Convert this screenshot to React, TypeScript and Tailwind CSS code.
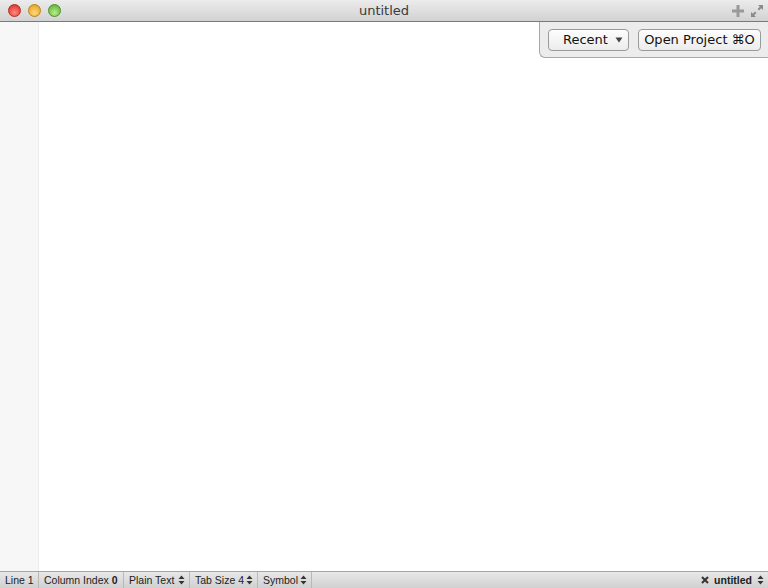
const font = { fontFamily: '"Lucida Grande", "DejaVu Sans", "Liberation Sans", sans-serif' };
const statusFont = { fontFamily: '"Liberation Sans", Arial, sans-serif' };

const Light = ({ from, to, edge }: { from: string; to: string; edge: string }) => (
  <span
    className="w-[13px] h-[13px] rounded-full border"
    style={{ background: `radial-gradient(circle at 50% 70%, ${from}, ${to})`, borderColor: edge }}
  />
);

const Updown = () => (
  <svg width="7" height="10" viewBox="0 0 7 10" className="shrink-0">
    <path d="M3.5 0.5 L6.5 4 H0.5 Z M3.5 9.5 L6.5 6 H0.5 Z" fill="#333" />
  </svg>
);

const StatusItem = ({ children, arrows, w }: { children: React.ReactNode; arrows?: boolean; w: string }) => (
  <div
    className={`flex items-center justify-between shrink-0 whitespace-nowrap h-full pl-[5px] pr-[4px] border-r border-[#b8b8b8] text-[10.5px] leading-none text-[#222] ${w}`}
  >
    <span>{children}</span>
    {arrows && <Updown />}
  </div>
);

const App = () => {
  return (
    <div className="w-[768px] h-[588px] flex flex-col bg-white overflow-hidden" style={font}>
      {/* title bar */}
      <div className="h-[22px] flex items-center shrink-0 bg-gradient-to-b from-[#ececec] to-[#d2d2d2] border-b border-[#7a7a7a]">
        <div className="w-[80px] flex items-center gap-[7px] pl-[8px]">
          <Light from="#ff8a80" to="#d6261c" edge="#b5291f" />
          <Light from="#ffd97a" to="#e09a10" edge="#b9821a" />
          <Light from="#b8ec8a" to="#55a92c" edge="#4a8f2a" />
        </div>
        <div className="flex-1 text-center text-[13px] text-[#3a3a3a]">untitled</div>
        <div className="w-[80px] flex items-center justify-end gap-[6px] pr-[4px]">
          <svg width="12" height="12" viewBox="0 0 12 12">
            <path d="M4.5 0 H7.5 V4.5 H12 V7.5 H7.5 V12 H4.5 V7.5 H0 V4.5 H4.5 Z" fill="#9a9a9a" />
          </svg>
          <svg width="14" height="14" viewBox="0 0 14 14">
            <path d="M8 1 H13 V6 L11.2 4.2 L9 6.4 L7.6 5 L9.8 2.8 Z M6 13 H1 V8 L2.8 9.8 L5 7.6 L6.4 9 L4.2 11.2 Z" fill="#8a8a8a" />
          </svg>
        </div>
      </div>

      {/* editor area */}
      <div className="relative flex flex-1 min-h-0">
        <div className="w-[39px] bg-[#f7f7f7] border-r border-[#ececec]" />
        <div className="flex-1" />
        <div className="absolute right-0 top-0 w-[229px] h-[36px] flex items-center gap-[9px] pl-[8px] bg-[#ececec] border-l border-b border-[#a8a8a8] rounded-bl-[6px]">
          <div className="w-[81px] h-[22px] flex items-center justify-between pl-[14px] pr-[5px] rounded-[4px] border border-[#9a9a9a] bg-gradient-to-b from-[#fdfdfd] to-[#ececec] text-[13px] text-[#111]">
            <span>Recent</span>
            <svg width="8" height="6" viewBox="0 0 8 6">
              <path d="M0.5 0.5 H7.5 L4 5.5 Z" fill="#444" />
            </svg>
          </div>
          <div className="w-[123px] h-[22px] flex items-center justify-center rounded-[4px] border border-[#9a9a9a] bg-gradient-to-b from-[#fdfdfd] to-[#ececec] text-[13px] text-[#111]">
            Open Project ⌘O
          </div>
        </div>
      </div>

      {/* status bar */}
      <div
        className="h-[17px] shrink-0 flex items-center bg-gradient-to-b from-[#e8e8e8] to-[#d0d0d0] border-t border-[#a5a5a5]"
        style={statusFont}
      >
        <StatusItem w="w-[39px]">Line 1</StatusItem>
        <StatusItem w="w-[85px]">
          Column Index <b>0</b>
        </StatusItem>
        <StatusItem w="w-[66px]" arrows>Plain Text</StatusItem>
        <StatusItem w="w-[68px]" arrows>Tab Size 4</StatusItem>
        <StatusItem w="w-[54px]" arrows>Symbol</StatusItem>
        <div className="flex-1" />
        <div className="flex items-center gap-[5px] pr-[4px] whitespace-nowrap text-[10.5px] leading-none text-[#222]">
          <svg width="8" height="8" viewBox="0 0 8 8">
            <path d="M1 1 L7 7 M7 1 L1 7" stroke="#333" strokeWidth="2" />
          </svg>
          <b>untitled</b>
          <Updown />
        </div>
      </div>
    </div>
  );
};

export default App;
